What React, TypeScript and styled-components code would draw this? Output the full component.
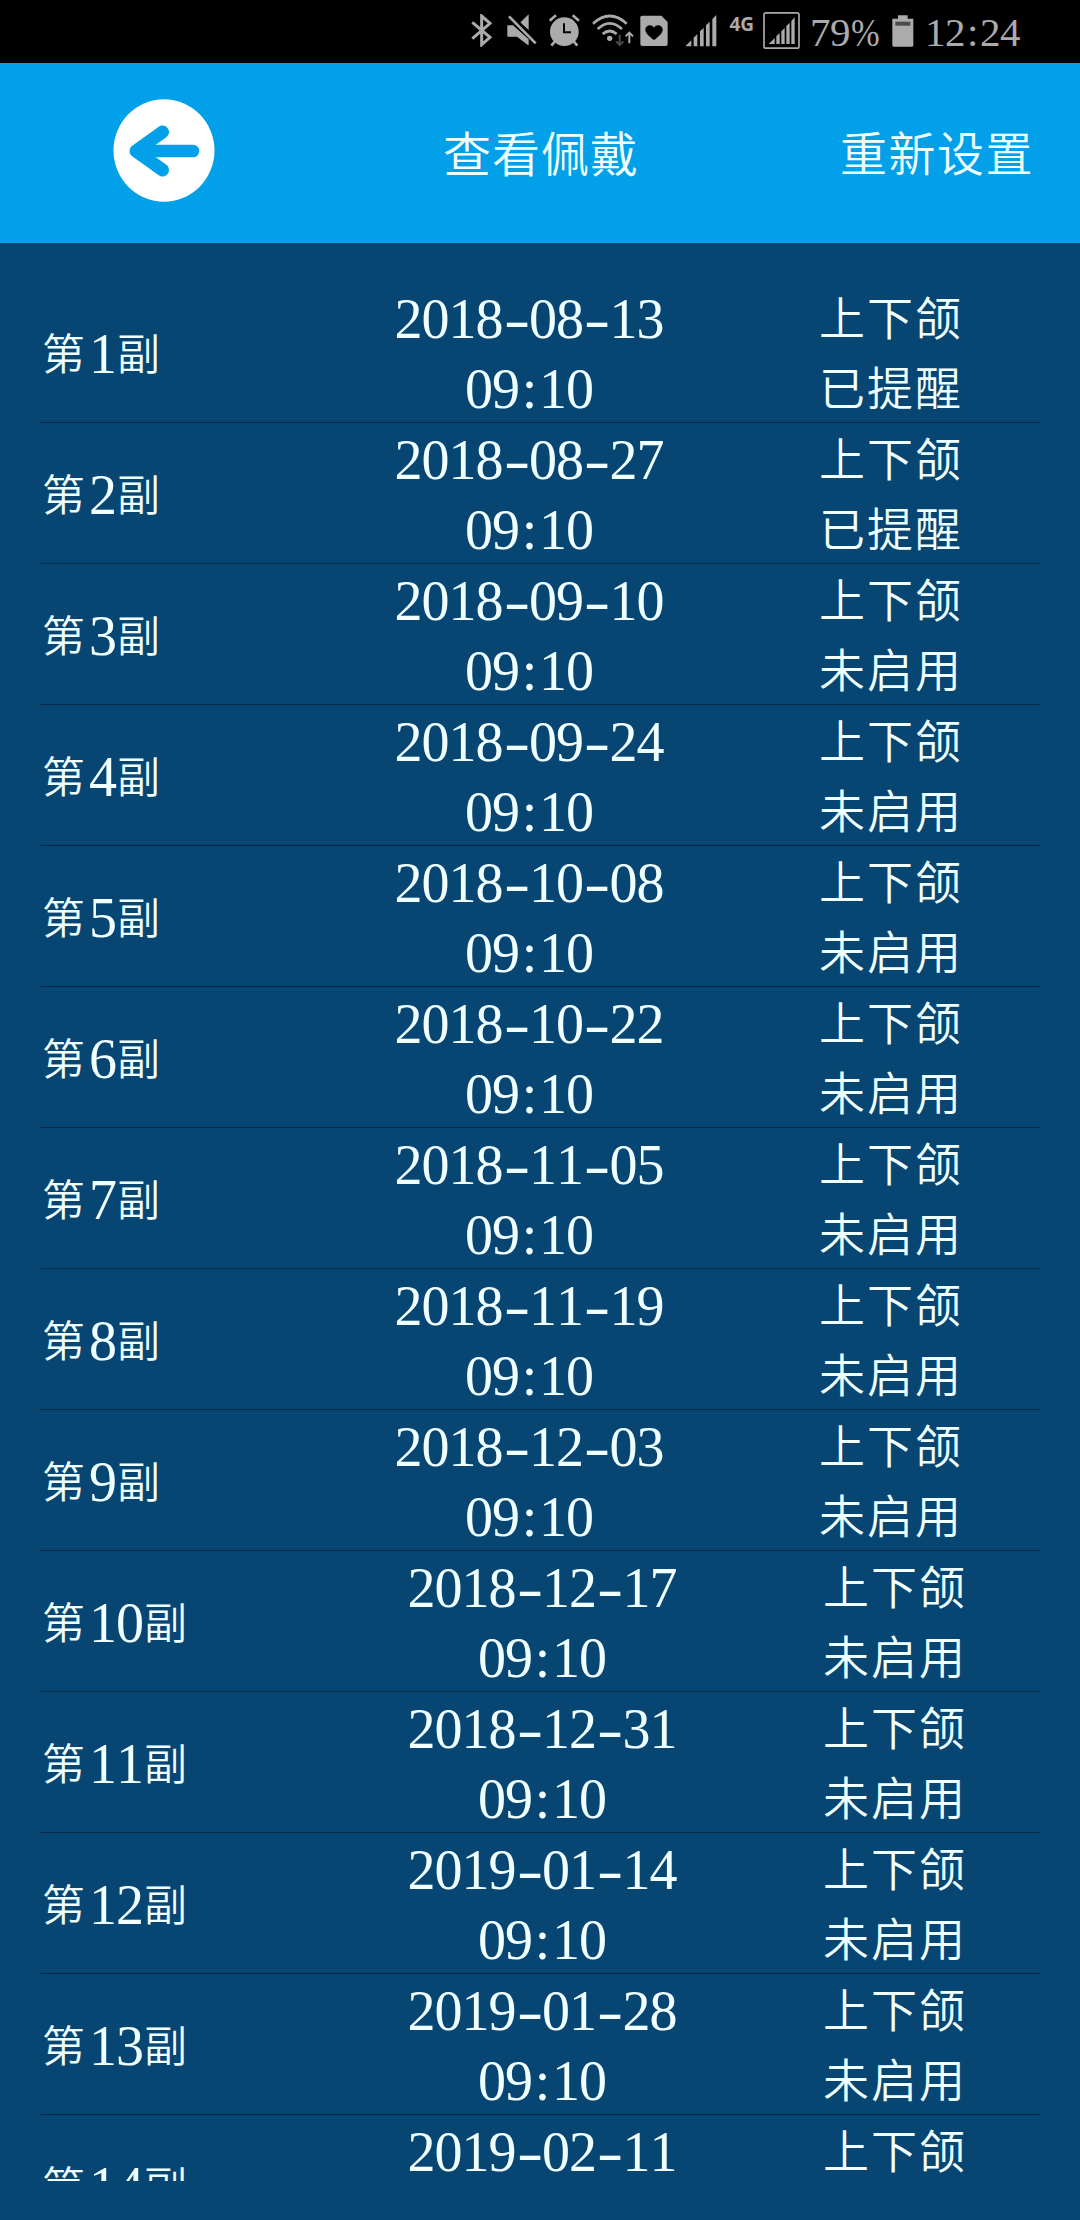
import React from 'react';
import styled, { createGlobalStyle } from 'styled-components';

const Global = createGlobalStyle`
  * { box-sizing: border-box; }
  html, body { margin: 0; padding: 0; background: #074573; }
`;

const cjk = `'Noto Sans CJK SC', sans-serif`;
const serif = `'Liberation Serif', 'Noto Sans CJK SC', serif`;

const Screen = styled.div`
  width: 1080px;
  height: 2220px;
  display: flex;
  flex-direction: column;
  overflow: hidden;
  background: #074573;
`;

const StatusBar = styled.div`
  height: 63px;
  flex: none;
  display: flex;
  align-items: flex-start;
  padding-left: 471px;
  background: #000;
  color: #ababab;
`;

const StatusIcon = styled.svg<{ $w: number; $h: number; $top: number; $gap: number }>`
  display: block;
  flex: none;
  width: ${p => p.$w}px;
  height: ${p => p.$h}px;
  margin-top: ${p => p.$top}px;
  margin-left: ${p => p.$gap}px;
  fill: #ababab;
`;

const NetworkType = styled.span`
  width: 25px;
  flex: none;
  margin: 14px 0 0 12.5px;
  font: 700 19px/20px 'Open Sans', sans-serif;
  white-space: nowrap;
`;

const StatusText = styled.span<{ $w: number; $gap: number }>`
  display: flex;
  flex: none;
  width: ${p => p.$w}px;
  margin: 9px 0 0 ${p => p.$gap}px;
  font: 41px/46px ${serif};
  letter-spacing: -0.5px;
  white-space: nowrap;
`;

const Percent = styled.span`
  margin-left: 1px;
  transform: scaleX(0.84);
  transform-origin: left;
`;

const StatusColon = styled.span`
  width: 15px;
  text-align: center;
`;

const Header = styled.header`
  height: 180px;
  flex: none;
  display: grid;
  grid-template-columns: 443px 396px 1fr;
  align-items: center;
  background: #02a0e9;
  color: #f0ffff;
`;

const BackButton = styled.button`
  width: 102px;
  height: 103px;
  margin: 0 0 6px 113px;
  padding: 0;
  border: 0;
  background: none;
`;

const BackIcon = styled.svg`
  display: block;
  width: 102px;
  height: 103px;
`;

const Title = styled.h1`
  margin: 0 0 4px 0;
  font: 350 48px/60px ${cjk};
  letter-spacing: 1px;
  white-space: nowrap;
`;

const Reset = styled.span`
  margin: 0 0 4px 1px;
  font: 350 47px/60px ${cjk};
  letter-spacing: 1.5px;
  white-space: nowrap;
`;

const List = styled.main`
  height: 1899px;
  margin: 39px 40px 0;
  flex: none;
  overflow: hidden;
  color: #f0ffff;
`;

const Row = styled.div<{ $wide: boolean }>`
  height: 141px;
  display: grid;
  grid-template-columns: ${p => (p.$wide ? '367px 415px 1fr' : '354px 424px 1fr')};
  border-bottom: 1px solid #062946;
`;

const Label = styled.div`
  display: flex;
  align-items: center;
  height: 144px;
  padding-left: 2px;
  white-space: nowrap;
`;

const Glyph = styled.span`
  margin-bottom: 7px;
  font: 350 43px/70px ${cjk};
`;

const Digits = styled.span`
  margin: 0 1px 0 4px;
  font: 56px/70px ${serif};
  font-kerning: none;
  letter-spacing: -1px;
`;

const When = styled.div`
  width: 270px;
  padding-top: 2px;
  font: 56px/70px ${serif};
  font-kerning: none;
  letter-spacing: -1px;
`;

const Line = styled.div`
  display: flex;
  justify-content: center;
  height: 70px;
  white-space: nowrap;
`;

const Dash = styled.span`
  width: 26.5px;
  display: flex;
  justify-content: center;
  transform: scaleX(1.4);
`;

const Colon = styled.span`
  width: 20px;
  text-align: center;
`;

const State = styled.div`
  width: 144px;
  margin: -2px 0 0 1px;
  font: 350 46px/70px ${cjk};
  letter-spacing: 2px;
`;

type Entry = { no: number; date: string; state: string };

const entries: Entry[] = [
  { no: 1, date: '2018-08-13', state: '已提醒' },
  { no: 2, date: '2018-08-27', state: '已提醒' },
  { no: 3, date: '2018-09-10', state: '未启用' },
  { no: 4, date: '2018-09-24', state: '未启用' },
  { no: 5, date: '2018-10-08', state: '未启用' },
  { no: 6, date: '2018-10-22', state: '未启用' },
  { no: 7, date: '2018-11-05', state: '未启用' },
  { no: 8, date: '2018-11-19', state: '未启用' },
  { no: 9, date: '2018-12-03', state: '未启用' },
  { no: 10, date: '2018-12-17', state: '未启用' },
  { no: 11, date: '2018-12-31', state: '未启用' },
  { no: 12, date: '2019-01-14', state: '未启用' },
  { no: 13, date: '2019-01-28', state: '未启用' },
  { no: 14, date: '2019-02-11', state: '未启用' },
];

function DateLine({ value }: { value: string }) {
  const [y, m, d] = value.split('-');
  return (
    <Line>
      <span>{y}</span><Dash>-</Dash><span>{m}</span><Dash>-</Dash><span>{d}</span>
    </Line>
  );
}

function EntryRow({ entry }: { entry: Entry }) {
  return (
    <Row $wide={entry.no > 9}>
      <Label><Glyph>第</Glyph><Digits>{entry.no}</Digits><Glyph>副</Glyph></Label>
      <When>
        <DateLine value={entry.date} />
        <Line><span>09</span><Colon>:</Colon><span>10</span></Line>
      </When>
      <State>
        <Line>上下颌</Line>
        <Line>{entry.state}</Line>
      </State>
    </Row>
  );
}

function StatusIcons() {
  return (
    <>
      <StatusIcon $w={21} $h={33} $top={14} $gap={0} viewBox="33 42 63 99">
        <path d="M37 67 L90 112 L65 134 V48 L90 70 L37 116" fill="none" stroke="#ababab" strokeWidth="9" />
      </StatusIcon>
      <StatusIcon $w={30} $h={31} $top={14} $gap={15} viewBox="142 42 90 93">
        <path d="M143 76 H160 L207 118 V137 L172 110 H143 Z M181 68 L207 43 V90 Z" />
        <path d="M156 45 L235 124" stroke="#000" strokeWidth="6" />
        <path d="M148 49 L228 130" stroke="#ababab" strokeWidth="8" />
      </StatusIcon>
      <StatusIcon $w={31} $h={33} $top={14} $gap={11.5} viewBox="266 42 93 99">
        <circle cx="312" cy="95" r="43" />
        <path d="M268 62 L287 46 M356 62 L337 46 M284 124 L273 137 M340 124 L351 137" stroke="#ababab" strokeWidth="8" />
        <path d="M311 70 V97 H332" fill="none" stroke="#000" strokeWidth="6" />
      </StatusIcon>
      <StatusIcon $w={43} $h={33} $top={14} $gap={12.5} viewBox="396 42 129 99">
        <g fill="none" stroke="#ababab" strokeWidth="8">
          <path d="M399 71 Q449 25 500 71" />
          <path d="M413 87 Q449 53 486 87" />
          <path d="M428 102 Q449 84 470 102" />
          <path d="M508 130 V101 M497 109 L508 98 L519 109" strokeWidth="6" />
          <path d="M479 104 V132 M468 124 L479 135 L490 124" stroke="#4b4b4b" strokeWidth="6" />
        </g>
        <circle cx="449" cy="115" r="8" />
      </StatusIcon>
      <StatusIcon $w={28} $h={32} $top={14.5} $gap={5} viewBox="539 43 84 96">
        <path d="M545 45 H603 L622 64 V130 Q622 136 616 136 H546 Q540 136 540 130 V50 Q540 45 545 45 Z" />
        <path d="M581 118 C566 106 555 97 555 87 C555 73 574 69 581 81 C588 69 607 73 607 87 C607 97 596 106 581 118 Z" fill="#000" />
      </StatusIcon>
      <StatusIcon $w={32} $h={32} $top={14.5} $gap={17} viewBox="674 43 96 96">
        <path d="M675 137 L693 119 V137 Z M700 111 L711 100 V137 H700 Z M719 92 L730 81 V137 H719 Z M737 74 L748 63 V137 H737 Z M756 55 L768 43 V137 H756 Z" />
      </StatusIcon>
      <NetworkType>4G</NetworkType>
      <StatusIcon $w={37} $h={37} $top={12} $gap={8.5} viewBox="7 36 111 111">
        <rect x="10" y="38.5" width="105" height="106" rx="6" fill="none" stroke="#ababab" strokeWidth="5" />
        <path d="M24 132 L42 114 V132 Z M47 109 L57 99 V132 H47 Z M62 94 L72 84 V132 H62 Z M77 78 L87 68 V132 H77 Z M92 63 L102 52 V132 H92 Z" />
      </StatusIcon>
      <StatusText $w={70} $gap={10}>79<Percent>%</Percent></StatusText>
      <StatusIcon $w={22} $h={32} $top={14.5} $gap={12} viewBox="395 43 66 96">
        <path d="M413 44 H442 V54 H459 V134 Q459 138 455 138 H400 Q396 138 396 134 V54 H413 Z" />
        <rect x="405" y="63" width="45" height="12" fill="#4b4b4b" />
      </StatusIcon>
      <StatusText $w={100} $gap={11}>12<StatusColon>:</StatusColon>24</StatusText>
    </>
  );
}

export default function App() {
  return (
    <>
      <Global />
      <Screen>
        <StatusBar><StatusIcons /></StatusBar>
        <Header>
          <BackButton aria-label="返回">
            <BackIcon viewBox="0 0 102 103">
              <ellipse cx="51" cy="51.5" rx="50.5" ry="51.2" fill="#fff" />
              <path
                d="M49.5 33 L23 52 L49.5 71"
                fill="none"
                stroke="#02a0e9"
                strokeWidth="13"
                strokeLinecap="round"
                strokeLinejoin="round"
              />
              <path d="M23 46 L36 45 V59 L23 58 Z" fill="#02a0e9" />
              <path d="M28 52 H80" stroke="#02a0e9" strokeWidth="12.6" strokeLinecap="round" />
            </BackIcon>
          </BackButton>
          <Title>查看佩戴</Title>
          <Reset>重新设置</Reset>
        </Header>
        <List>
          {entries.map(e => <EntryRow key={e.no} entry={e} />)}
        </List>
      </Screen>
    </>
  );
}
